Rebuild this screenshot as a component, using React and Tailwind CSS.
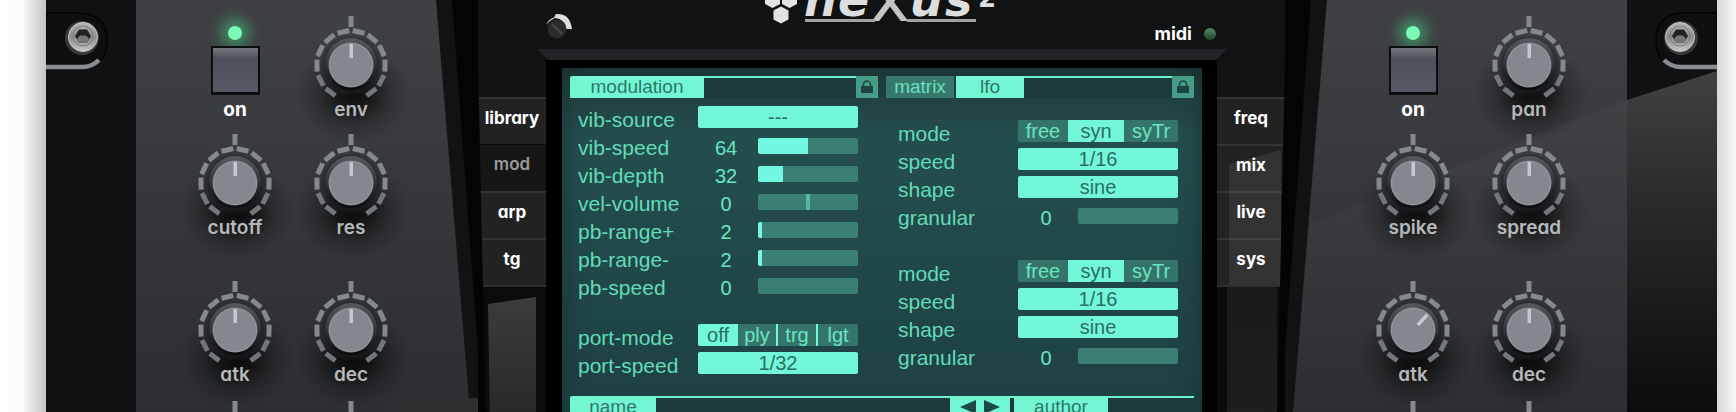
import { useState } from "react";

const TICK_ANGLES = [-143, -117, -91, -65, -39, -13, 13, 39, 65, 91, 117, 143];

function Knob({ label, name, turn = 0 }) {
  return (
    <label className="relative flex flex-col items-center">
      <input type="range" aria-label={name} defaultValue={50 + turn / 3} className="sr-only" />
      <svg width="74" height="82" viewBox="-37 -49 74 82" className="overflow-visible">
        <defs>
          <radialGradient id="knobShadow">
            <stop offset="0" stopColor="#000" stopOpacity="0.8" />
            <stop offset="0.3" stopColor="#000" stopOpacity="0.6" />
            <stop offset="0.65" stopColor="#000" stopOpacity="0.2" />
            <stop offset="1" stopColor="#000" stopOpacity="0" />
          </radialGradient>
          <radialGradient id="knobHalo">
            <stop offset="0.75" stopColor="#121315" />
            <stop offset="1" stopColor="#2c2e31" stopOpacity="0" />
          </radialGradient>
          <linearGradient id="knobSide" x1="0" y1="0" x2="0" y2="1">
            <stop offset="0" stopColor="#55585c" />
            <stop offset="0.5" stopColor="#33363a" />
            <stop offset="1" stopColor="#08090a" />
          </linearGradient>
        </defs>
        <ellipse cx="2" cy="28" rx="58" ry="50" fill="url(#knobShadow)" />
        {TICK_ANGLES.map((a) => (
          <rect
            key={a}
            x="-6"
            y="-36.5"
            width="12"
            height="5"
            fill={Math.abs(a) > 100 ? "#73767a" : "#85888d"}
            transform={`rotate(${a})`}
          />
        ))}
        <rect x="-2.5" y="-49" width="5" height="11" fill="#85888c" />
        <circle r="31" fill="url(#knobHalo)" />
        <circle cy="-1" r="26" fill="url(#knobSide)" />
        <circle r="22.5" fill="#84878d" />
        <circle r="21.5" fill="none" stroke="#a0a4aa" strokeWidth="1" opacity="0.5" />
        <rect x="-1.5" y="-21" width="3.5" height="14" fill="#c3c8d3" transform={`rotate(${turn})`} />
      </svg>
      <span className="relative h-6 text-[19px] leading-6 font-semibold text-[#b6b8bb]">{label}</span>
    </label>
  );
}

function PowerButton() {
  const [on, setOn] = useState(true);
  return (
    <div className="relative flex flex-col items-center pt-[10px]">
      <span
        className={
          on
            ? "h-[14px] w-[14px] rounded-full bg-[#7dfbb6] shadow-[0_0_14px_7px_rgba(70,200,130,0.6)]"
            : "h-[14px] w-[14px] rounded-full bg-[#1d4a30]"
        }
      />
      <button
        type="button"
        aria-label="on"
        aria-pressed={on}
        onClick={() => setOn(!on)}
        className="mt-[6px] h-[49px] w-[49px] border-2 border-b-3 border-[#0c0d11] bg-linear-to-b from-[#74777c] via-[#4d515b] via-25% to-[#555a64]"
      />
      <span className="mt-[3px] h-6 text-[19px] leading-6 font-bold text-white">on</span>
    </div>
  );
}

function KnobPanel({ side, rows }) {
  const left = side === "left";
  return (
    <section className="relative w-[342px] shrink-0">
      <div
        className={
          left
            ? "absolute inset-0 bg-[#121213] [clip-path:polygon(290px_0,316px_0,342px_85%,342px_100%,320px_100%)]"
            : "absolute inset-0 bg-[#121213] [clip-path:polygon(52px_0,26px_0,0_85%,0_100%,22px_100%)]"
        }
      />
      <div
        className={
          left
            ? "absolute inset-0 bg-linear-to-b from-[#3f4144] via-[#35373a] to-[#2c2e31] [clip-path:polygon(0_0,300px_0,334px_100%,0_100%)]"
            : "absolute inset-0 bg-linear-to-b from-[#3f4144] via-[#35373a] to-[#2c2e31] [clip-path:polygon(42px_0,100%_0,100%_100%,8px_100%)]"
        }
      >
        {!left && (
          <div className="absolute inset-0 bg-linear-to-b from-white/4 via-white/2 to-transparent [clip-path:polygon(0_234px,100%_100px,100%_100%,0_100%)]" />
        )}
      </div>
      {left && (
        <div className="absolute right-0 bottom-0 h-[14px] w-[130px] bg-linear-to-r from-transparent to-[#2f2f30]" />
      )}
      <div className={left ? "relative pt-4 pl-[41px]" : "relative pt-4 pl-[70px]"}>
        <div className="grid grid-cols-[116px_116px]">
          <PowerButton />
          <Knob {...rows[0]} />
        </div>
        <div className="mt-3 grid grid-cols-[116px_116px]">
          <Knob {...rows[1]} />
          <Knob {...rows[2]} />
        </div>
        <div className="mt-[41px] grid grid-cols-[116px_116px]">
          <Knob {...rows[3]} />
          <Knob {...rows[4]} />
        </div>
        <div className="mt-[14px] grid grid-cols-[116px_116px]">
          <Knob name="sustain" />
          <Knob name="release" />
        </div>
      </div>
    </section>
  );
}

function Rail({ side }) {
  const left = side === "left";
  return (
    <div className="relative w-[90px] shrink-0 overflow-hidden bg-[#101112]">
      {!left && (
        <div className="absolute inset-x-0 top-[71px] bottom-0 bg-linear-to-b from-[#414141] via-[#242424] via-50% to-[#0c0c0c] [clip-path:polygon(0_29px,100%_0,100%_100%,0_100%)]" />
      )}
      <svg width="90" height="80" viewBox="0 0 90 80" className={left ? "relative" : "relative -scale-x-100"}>
        <defs>
          <linearGradient id="bolt" x1="0" y1="0" x2="0" y2="1">
            <stop offset="0" stopColor="#b9b8b6" />
            <stop offset="0.5" stopColor="#8d8b89" />
            <stop offset="1" stopColor="#c9c7c5" />
          </linearGradient>
        </defs>
        <path d="M0 13H35Q61 15 61 40T38 66H0Z" fill="#0e0f10" stroke="#030303" strokeWidth="1.5" />
        <path d="M0 67H36Q46 67 53 60" fill="none" stroke="#898c91" strokeWidth="4.5" />
        <circle cx="36" cy="38" r="17" fill="#3a3a3a" />
        <circle cx="37" cy="37" r="14.5" fill="url(#bolt)" stroke="#c9c8c6" strokeWidth="1" />
        <circle cx="37" cy="36" r="10" fill="none" stroke="#7b7a78" />
        <path d="M29 36L33 29.500H41L45 36L41 42.500H33Z" fill="#222" />
        <path d="M31 39L34 35.500H40L43 39L41 42.500H33Z" fill="#777674" />
      </svg>
    </div>
  );
}

function Logo() {
  return (
    <svg width="234" height="24" viewBox="0 0 234 24" className="overflow-visible" aria-label="nexus 2">
      <g fill="#e3e3e3">
        <path d="M16 6.500L23.500 10.500V19.500L16 23.500L8.500 19.500V10.500Z" />
        <path d="M7.500 -9L15 -5V4L7.500 8L0 4V-5Z" />
        <path d="M24.500 -9L32 -5V4L24.500 8L17 4V-5Z" />
      </g>
      <g fill="#dedede" fontFamily="DejaVu Sans" fontWeight="bold">
        <text x="39 73" y="16" fontSize="46" fontStyle="italic">ne</text>
        <text x="105" y="21" fontSize="68" fontWeight="normal" fill="#c4c4c4">x</text>
        <text x="145 180" y="16" fontSize="46" fontStyle="italic">us</text>
        <text x="213" y="7" fontSize="26">2</text>
      </g>
      <path d="M40 20.500H110M142 20.500H211" stroke="#a2a2a2" strokeWidth="3" />
    </svg>
  );
}

function SideTabs({ side, tabs, active }) {
  const left = side === "left";
  return (
    <nav
      className={`relative flex w-[68px] shrink-0 flex-col bg-[#0b0b0c] pt-[37px] ${
        left ? "[clip-path:polygon(0_0,100%_0,100%_100%,8px_100%)]" : "[clip-path:polygon(0_0,100%_0,calc(100%-8px)_100%,0_100%)]"
      }`}
    >
      <div className="absolute inset-x-0 top-0 h-[37px] bg-[#111213]" />
      {tabs.map((t) => (
        <button
          key={t}
          type="button"
          className={
            t === active
              ? "h-[47px] border-t border-[#0a0a0a] bg-[#161616] pb-[6px] text-[17px] font-semibold text-[#9b9b9b]"
              : "h-[47px] border-t-2 border-[#343434] bg-[#222223] pb-[6px] text-[17px] font-bold text-white"
          }
        >
          {t}
        </button>
      ))}
      <div className="border-t-2 border-[#2e2e2e]" />
      {left ? (
        <div className="mr-[10px] ml-[10px] mt-[10px] flex-1 bg-linear-to-b from-[#3c3c3c] to-[#272727] [clip-path:polygon(0_7px,100%_0,100%_100%,2px_100%)]" />
      ) : (
        <>
          <div className="mr-2 ml-[10px] flex-1 bg-linear-to-b from-[#1a1a1a] to-[#1e1e1e]" />
          <div className="pointer-events-none absolute top-[90px] right-1 left-3 h-[135px] bg-white/8 [clip-path:polygon(0_14px,100%_0,100%_100%,0_100%)]" />
        </>
      )}
    </nav>
  );
}

function Lock() {
  return (
    <button type="button" aria-label="lock" className="flex h-[22px] w-[22px] items-center justify-center bg-[#469c84]">
      <svg width="12" height="14" viewBox="0 0 12 14">
        <path d="M2.500 7V4.500a3.500 3.500 0 0 1 7 0V7" fill="none" stroke="#1c4441" strokeWidth="1.500" />
        <rect y="6" width="12" height="7" rx="0.500" fill="#1c4441" />
      </svg>
    </button>
  );
}

const Line = ({ className = "flex-1" }) => (
  <div className={`h-[22px] border-t-2 border-[#6ff0cd] bg-[#1c393b] ${className}`} />
);

function Row({ label, children }) {
  return (
    <div className="flex h-7 justify-between">
      <span className="text-[21px] leading-7 text-[#62dcb6]">{label}</span>
      <div className="flex w-40">{children}</div>
    </div>
  );
}

function Picker({ label, value }) {
  return (
    <Row label={label}>
      <select
        aria-label={label}
        className="h-[22px] w-40 appearance-none rounded-[2px] bg-[#72f7d8] text-center text-[20px] leading-[22px] text-[#2b6e66] [text-align-last:center]"
      >
        <option>{value}</option>
      </select>
    </Row>
  );
}

function Slider({ label, value, fill = 0, centered }) {
  const background = centered
    ? "linear-gradient(90deg, #3a7f71 48%, #55b79c 48% 52%, #3a7f71 52%)"
    : `linear-gradient(90deg, #72f8e2 ${fill}%, #3a7f71 ${fill}%)`;
  return (
    <Row label={label}>
      <output className="w-[60px] pr-1 text-center text-[20px] leading-7 text-[#69e6c0]">{value}</output>
      <input
        type="range"
        aria-label={label}
        defaultValue={fill}
        style={{ background }}
        className="mt-1 h-4 w-[100px] appearance-none rounded-[2px] [&::-webkit-slider-thumb]:h-0 [&::-webkit-slider-thumb]:w-0 [&::-webkit-slider-thumb]:appearance-none"
      />
    </Row>
  );
}

function Segments({ label, options, initial, cols, divided }) {
  const [picked, setPicked] = useState(initial);
  return (
    <Row label={label}>
      <div className={`grid h-[22px] w-40 overflow-hidden rounded-[2px] bg-[#357569] ${cols}`}>
        {options.map((o, i) => (
          <button
            key={o}
            type="button"
            aria-pressed={o === picked}
            onClick={() => setPicked(o)}
            className={`text-[20px] leading-[22px] ${
              o === picked ? "bg-[#72f7d8] text-[#2b6e66]" : "text-[#69e6c0]"
            } ${divided && (i === 1 || i === 2) ? "border-r-2 border-[#72f7d8]" : ""}`}
          >
            {o}
          </button>
        ))}
      </div>
    </Row>
  );
}

function Lfo() {
  return (
    <div>
      <Segments label="mode" options={["free", "syn", "syTr"]} initial="syn" cols="grid-cols-[50px_56px_54px]" />
      <Picker label="speed" value="1/16" />
      <Picker label="shape" value="sine" />
      <Slider label="granular" value="0" />
    </div>
  );
}

const tabOn = "h-[22px] bg-[#72f7d2] text-[19px] leading-[22px] text-[#2f776b]";

function Screen() {
  return (
    <main className="flex-1 bg-black pt-2 pr-[15px] pl-4">
      <div className="h-full bg-linear-to-b from-[#1e3a39] via-[#244e4e] via-20% to-[#1d4043] p-2 font-['Liberation_Sans',Arial,sans-serif] shadow-[inset_0_0_24px_rgba(18,45,40,0.7)]">
        <div className="grid grid-cols-2 gap-2">
          <div>
            <div className="flex">
              <button type="button" className={`${tabOn} w-[134px] rounded-tl-[2px]`}>modulation</button>
              <Line />
              <Lock />
            </div>
            <div className="pt-2 pr-5 pl-2">
              <Picker label="vib-source" value="---" />
              <Slider label="vib-speed" value="64" fill={50} />
              <Slider label="vib-depth" value="32" fill={25} />
              <Slider label="vel-volume" value="0" centered />
              <Slider label="pb-range+" value="2" fill={4} />
              <Slider label="pb-range-" value="2" fill={4} />
              <Slider label="pb-speed" value="0" />
              <div className="pt-[22px]">
                <Segments label="port-mode" options={["off", "ply", "trg", "lgt"]} initial="off" cols="grid-cols-4" divided />
                <Picker label="port-speed" value="1/32" />
              </div>
            </div>
          </div>
          <div>
            <div className="flex">
              <button type="button" className="mr-[2px] h-[22px] w-[68px] bg-[#36796c] text-[19px] leading-[22px] text-[#69e0bc]">
                matrix
              </button>
              <button type="button" className={`${tabOn} w-[68px]`}>lfo</button>
              <Line />
              <Lock />
            </div>
            <div className="flex flex-col gap-7 pt-[22px] pr-4 pl-3">
              <Lfo />
              <Lfo />
            </div>
          </div>
        </div>
        <div className="mt-4 flex">
          <button type="button" className={`${tabOn} w-[86px] rounded-tl-[2px]`}>name</button>
          <Line />
          <div className="flex h-[22px] w-[60px] items-center justify-center gap-2 bg-[#72f7d2]">
            <button type="button" aria-label="previous">
              <svg width="16" height="14" viewBox="0 0 16 14"><path d="M0 7L16 0V14Z" fill="#1d4a48" /></svg>
            </button>
            <button type="button" aria-label="next">
              <svg width="16" height="14" viewBox="0 0 16 14"><path d="M16 7L0 0V14Z" fill="#1d4a48" /></svg>
            </button>
          </div>
          <Line className="w-1" />
          <button type="button" className={`${tabOn} w-[94px]`}>author</button>
          <Line className="w-[86px]" />
        </div>
      </div>
    </main>
  );
}

const leftKnobs = [
  { label: "env" },
  { label: "cutoff" },
  { label: "res" },
  { label: "atk" },
  { label: "dec" },
];

const rightKnobs = [
  { label: "pan" },
  { label: "spike" },
  { label: "spread" },
  { label: "atk", turn: 42 },
  { label: "dec" },
];

export default function App() {
  return (
    <div className="flex h-screen overflow-hidden bg-[#040404] font-[Inter,sans-serif] [font-feature-settings:'cv11']">
      <div className="w-[46px] shrink-0 bg-linear-to-r from-white via-[#fafafa] via-50% to-[#c4c4c4]" />
      <Rail side="left" />
      <KnobPanel side="left" rows={leftKnobs} />
      <div className="flex min-w-0 flex-1 flex-col">
        <header className="grid h-[49px] shrink-0 grid-cols-3 bg-[#111213]">
          <svg width="32" height="30" viewBox="0 0 32 30" className="mt-3 ml-16">
            <path d="M4 13A13 13 0 0 1 12 5.500L14 2Q28 1 30 17H24Q23 7 13 6Q8 8 4 13Z" fill="#dcdcdc" />
            <circle cx="15" cy="17" r="9.500" fill="#2b2b2b" />
            <path d="M10 12L20 22" stroke="#4a4744" strokeWidth="2" />
          </svg>
          <div className="flex justify-center">
            <Logo />
          </div>
          <div className="flex items-center justify-end gap-3 pt-[18px] pr-[69px]">
            <span className="text-[18px] font-bold text-white">midi</span>
            <span className="h-3 w-3 rounded-full bg-linear-to-b from-[#5c8166] to-[#164b22]" />
          </div>
        </header>
        <div className="shrink-0 bg-[#111213]">
          <div className="mr-[58px] ml-[59px] h-[11px] bg-[#212326] [clip-path:polygon(0_0,100%_0,calc(100%-11px)_100%,11px_100%)]" />
        </div>
        <div className="flex flex-1">
          <SideTabs side="left" tabs={["library", "mod", "arp", "tg"]} active="mod" />
          <Screen />
          <SideTabs side="right" tabs={["freq", "mix", "live", "sys"]} />
        </div>
      </div>
      <KnobPanel side="right" rows={rightKnobs} />
      <Rail side="right" />
      <div className="w-[19px] shrink-0 bg-linear-to-r from-[#d9d9d9] to-[#f7f7f7]" />
    </div>
  );
}
